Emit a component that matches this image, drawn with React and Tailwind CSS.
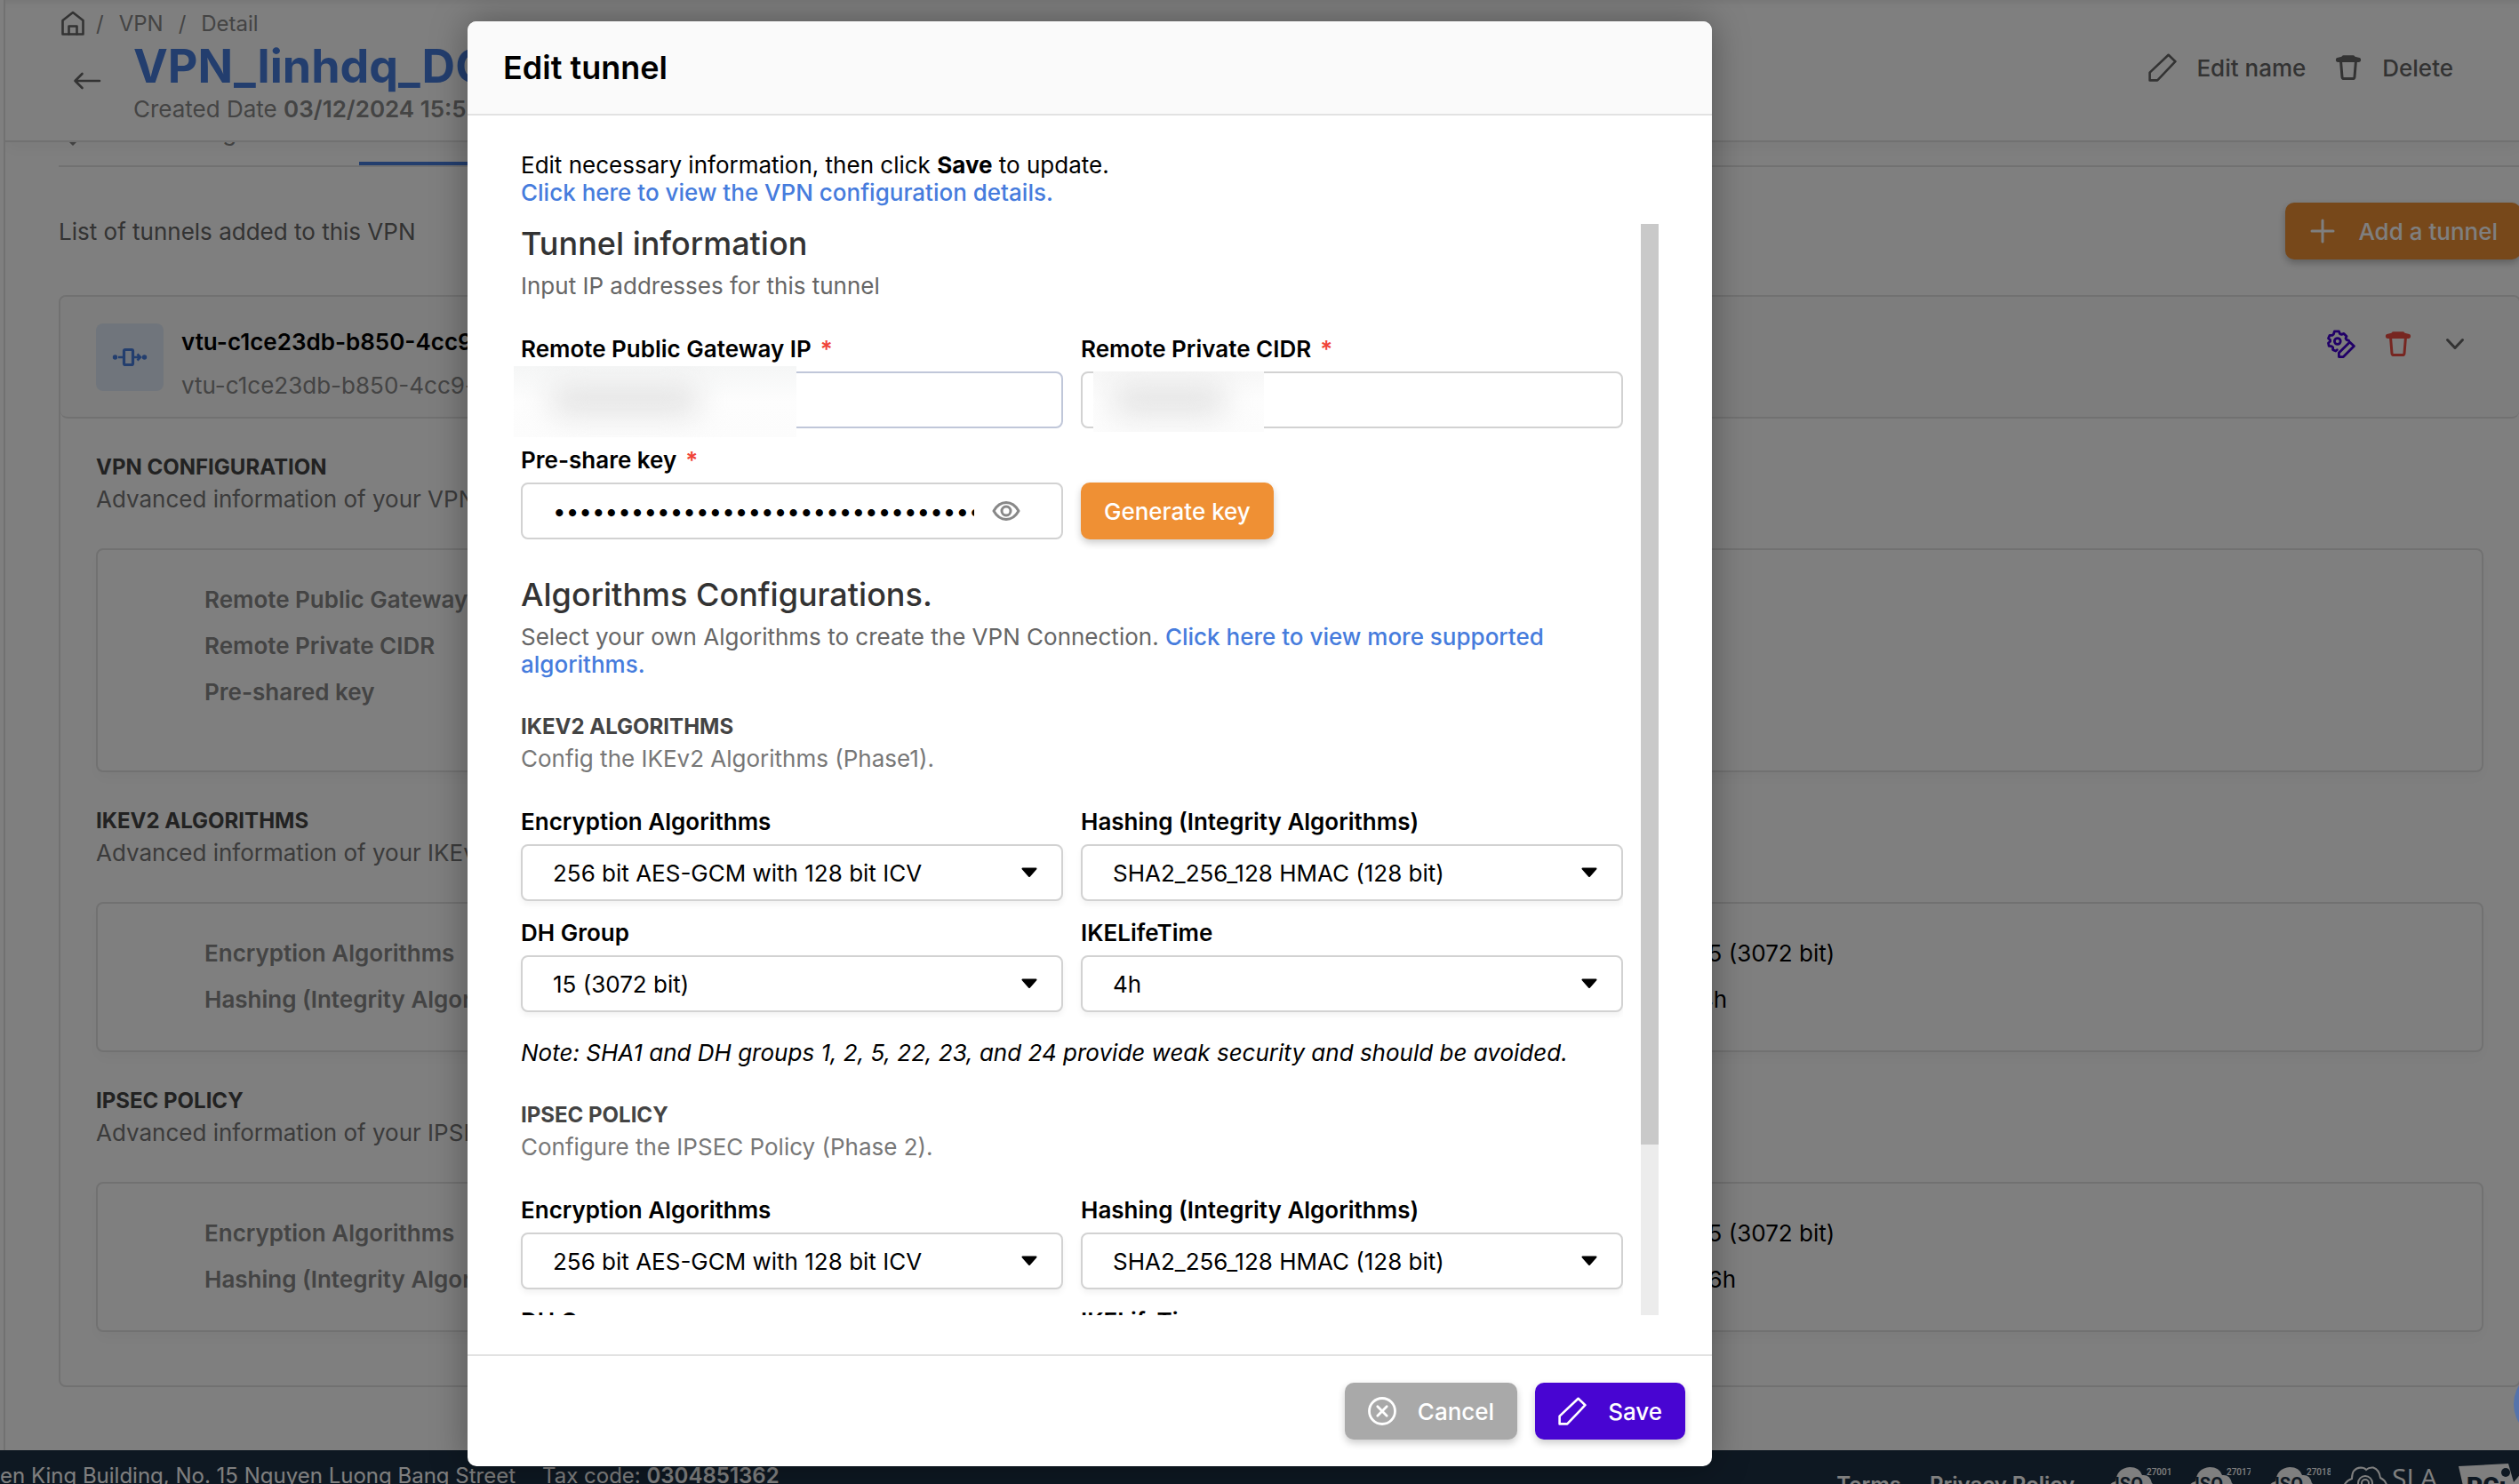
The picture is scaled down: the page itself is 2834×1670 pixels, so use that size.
import React, { useState } from "react";

function PencilIcon({ className }) {
  return (
    <svg viewBox="0 0 32 32" className={className} fill="none" stroke="currentColor" strokeWidth="2.6" strokeLinejoin="round" aria-hidden="true">
      <path d="M1.6 30.4V21.6L22.6 1.8L30.4 9.2L10.2 30.4Z" />
    </svg>
  );
}

function TrashIcon({ className }) {
  return (
    <svg viewBox="0 0 32 32" className={className} aria-hidden="true">
      <path d="M10.5 2.2h11a2 2 0 0 1 2 1.6l4 .9a2.6 2.6 0 0 1 0 5.2H4.5a2.6 2.6 0 0 1 0-5.2l4-.9a2 2 0 0 1 2-1.6z" fill="currentColor" />
      <path d="M7.6 9.5L9 26.600a2.2 2.2 0 0 0 2.2 2h9.600a2.2 2.2 0 0 0 2.2-2L24.4 9.5" fill="none" stroke="currentColor" strokeWidth="3" />
    </svg>
  );
}

function HomeIcon({ className }) {
  return (
    <svg viewBox="0 0 32 32" className={className} fill="none" stroke="currentColor" strokeWidth="2.6" strokeLinejoin="round" strokeLinecap="round" aria-hidden="true">
      <path d="M4.5 13L16 4L27.5 13V28.5H4.5Z" />
      <path d="M11.5 28.5V19.5H20.5V28.5" />
    </svg>
  );
}

function BackIcon({ className }) {
  return (
    <svg viewBox="0 0 32 32" className={className} fill="none" stroke="currentColor" strokeWidth="2.6" strokeLinejoin="round" strokeLinecap="round" aria-hidden="true">
      <path d="M30 16H2.5M10.5 8L2.5 16L10.5 24" />
    </svg>
  );
}

function PlusIcon({ className }) {
  return (
    <svg viewBox="0 0 32 32" className={className} fill="none" stroke="currentColor" strokeWidth="3" strokeLinecap="round" aria-hidden="true">
      <path d="M16 4V28M4 16H28" />
    </svg>
  );
}

function CancelIcon({ className }) {
  return (
    <svg viewBox="0 0 32 32" className={className} fill="none" stroke="currentColor" strokeWidth="2.8" strokeLinecap="round" aria-hidden="true">
      <circle cx="16" cy="16" r="14.5" />
      <path d="M10.8 10.8L21.2 21.2M21.2 10.8L10.8 21.2" />
    </svg>
  );
}

function EyeIcon({ className }) {
  return (
    <svg viewBox="0 0 32 24" className={className} fill="none" stroke="currentColor" strokeWidth="3" aria-hidden="true">
      <path d="M2 12C6 5 10.5 2.5 16 2.5S26 5 30 12C26 19 21.5 21.5 16 21.5S6 19 2 12Z" strokeLinejoin="round" />
      <circle cx="16" cy="12" r="5" />
    </svg>
  );
}

function ShieldIcon({ className }) {
  return (
    <svg viewBox="0 0 32 32" className={className} fill="currentColor" aria-hidden="true">
      <path d="M16 1L28 6V14C28 21 22 26 16 32C10 26 4 21 4 14V6Z" />
    </svg>
  );
}

function ChevronIcon({ className }) {
  return (
    <svg viewBox="0 0 32 32" className={className} fill="none" stroke="currentColor" strokeWidth="3" strokeLinecap="round" strokeLinejoin="round" aria-hidden="true">
      <path d="M7.5 11.5L16 20.5L24.5 11.5" />
    </svg>
  );
}

function GearEditIcon({ className }) {
  return (
    <svg viewBox="0 0 32 32" className={className} fill="none" stroke="currentColor" strokeWidth="2.8" strokeLinejoin="round" strokeLinecap="round" aria-hidden="true">
      <path d="M11.3 22.7L9.8 24L6.6 22.6V19.8L5 18.6L2.2 18.4L1.5 15L3.6 13.2V11.6L1.5 9.8L3 6.4L5.8 6.4L7.4 5.2L8.4 1.8H13.4L14.4 4.6L16.4 5.4L19 4.4L22 7.4L21 9.8L22 11.4L24.6 12.4" />
      <circle cx="11.8" cy="13" r="3.4" />
      <path d="M13.4 30.6V26L25.6 14L30.4 18.6L18.4 30.6Z" />
    </svg>
  );
}

function TunnelIcon({ className }) {
  return (
    <svg viewBox="0 0 40 24" className={className} fill="none" stroke="currentColor" strokeWidth="3.2" aria-hidden="true">
      <rect x="13.5" y="3.5" width="10" height="17" rx="1.5" />
      <path d="M7 12H13M24 12H31M28.5 8.5L32 12L28.5 15.5" strokeWidth="2.6" />
      <circle cx="3.5" cy="12" r="2.7" fill="currentColor" stroke="none" />
      <circle cx="36.5" cy="12" r="2.7" fill="currentColor" stroke="none" />
    </svg>
  );
}

function IsoLogo({ number }) {
  return (
    <svg viewBox="0 0 72 48" className="h-12 w-[72px]" role="img" aria-label={"ISO " + number}>
      <path d="M8 44A13 13 0 0 1 2 30Q1 19 10 17Q12 2 26 1Q37 1 40 10Q49 9 51 19Q57 24 55 34Q53 42 46 44Z" fill="#fff" />
      <text x="9" y="27" fontSize="20" fontWeight="700" fontFamily="Roboto, sans-serif" fill="#1d3044">ISO</text>
      <text x="45" y="10" fontSize="10" fontWeight="500" fontFamily="Roboto, sans-serif" fill="#fff">{number}</text>
    </svg>
  );
}

function SlaLogo() {
  return (
    <svg viewBox="0 0 120 48" className="h-12 w-[120px]" role="img" aria-label="SLA">
      <g fill="none" stroke="#fff" strokeWidth="2">
        <path d="M8 44Q0 38 2 27Q3 17 12 14Q12 2 22 1.5Q26 1.5 28 4Q31 1 36 1.5Q43 4 44 13Q52 17 52 27Q52 38 44 44" />
        <circle cx="27" cy="19" r="8" />
        <circle cx="27" cy="19" r="4" />
      </g>
      <text x="57" y="24" fontSize="30" fontFamily="'Open Sans', sans-serif" fill="#fff">SLA</text>
    </svg>
  );
}

function PciLogo() {
  return (
    <svg viewBox="0 0 72 48" className="h-12 w-[72px]" role="img" aria-label="PCI">
      <path d="M0 4L56 1L62 22L72 10V48H10Z" fill="#fff" />
      <circle cx="53" cy="11" r="5" fill="#1d3044" />
      <text x="9" y="36" fontSize="28" fontWeight="900" fontFamily="Roboto, sans-serif" fill="#1d3044">PCı</text>
    </svg>
  );
}

const SECTIONS = [
  {
    title: "VPN CONFIGURATION",
    text: "Advanced information of your VPN",
    tall: true,
    left: [["Remote Public Gateway IP", ""], ["Remote Private CIDR", ""], ["Pre-shared key", ""]],
    right: [],
  },
  {
    title: "IKEV2 ALGORITHMS",
    text: "Advanced information of your IKEv2",
    left: [["Encryption Algorithms", ""], ["Hashing (Integrity Algorithms)", ""]],
    right: [["DH Group", "15 (3072 bit)"], ["IKELifeTime", "4h"]],
  },
  {
    title: "IPSEC POLICY",
    text: "Advanced information of your IPSEC",
    left: [["Encryption Algorithms", ""], ["Hashing (Integrity Algorithms)", ""]],
    right: [["DH Group", "15 (3072 bit)"], ["Lifetime", "16h"]],
  },
];

function DetailList({ rows }) {
  return (
    <dl className="flex flex-col gap-[21px]">
      {rows.map(([label, value]) => (
        <div key={label} className="flex">
          <dt className="w-[400px] shrink-0 font-semibold text-[#888888]">{label}</dt>
          <dd className="text-black">{value}</dd>
        </div>
      ))}
    </dl>
  );
}

function DetailSection({ section }) {
  return (
    <section>
      <h3 className="text-[24px] leading-[29px] font-bold text-[#444444]">{section.title}</h3>
      <p className="mt-[6px] text-[#777777]">{section.text}</p>
      <div
        className={
          "mt-10 grid grid-cols-2 rounded-lg border-2 border-[#e2e2e2] pt-10 pl-[120px] shadow-[0_8px_16px_rgba(0,0,0,0.03)] " +
          (section.tall ? "pb-[73px]" : "pb-[42px]")
        }
      >
        <DetailList rows={section.left} />
        <DetailList rows={section.right} />
      </div>
    </section>
  );
}

function FieldLabel({ id, children, required }) {
  return (
    <label htmlFor={id} className="block font-semibold text-black">
      {children}
      {required && <span className="ml-[10px] text-[#f04438]">*</span>}
    </label>
  );
}

function SelectField({ id, label, options }) {
  const [value, setValue] = useState(options[0]);
  return (
    <div>
      <FieldLabel id={id}>{label}</FieldLabel>
      <div className="relative mt-[10px]">
        <select
          id={id}
          value={value}
          onChange={(e) => setValue(e.target.value)}
          className="h-16 w-full appearance-none rounded-lg border-2 border-[#d2d2d2] bg-white pr-16 pl-[34px] text-black shadow-[0_4px_6px_rgba(0,0,0,0.05)]"
        >
          {options.map((o) => (
            <option key={o}>{o}</option>
          ))}
        </select>
        <svg viewBox="0 0 20 12" className="pointer-events-none absolute top-[26px] right-7 h-3 w-5" aria-hidden="true">
          <path d="M2.5 1.5H17.5L10 10Z" fill="#000" stroke="#000" strokeWidth="2" strokeLinejoin="round" />
        </svg>
      </div>
    </div>
  );
}

function Dialog() {
  const [key, setKey] = useState("k7Jq2LmX9vRt4ZbN8cWp5HsD3fGy6TuA1eQo");
  const [shown, setShown] = useState(false);
  return (
    <div
      role="dialog"
      aria-modal="true"
      aria-labelledby="dialog-title"
      className="flex h-full w-full max-w-[1400px] flex-col overflow-hidden rounded-[10px] bg-white shadow-[0_0_40px_rgba(0,0,0,0.35)]"
    >
      <header className="border-b-2 border-[#e2e2e2] bg-[#fafafa] px-10 py-[30px]">
        <h2 id="dialog-title" className="text-[36px] leading-[44px] font-semibold text-black">Edit tunnel</h2>
      </header>

      <div className="flex min-h-0 flex-1 flex-col px-[60px] pt-10 pb-11">
        <p className="text-black">
          Edit necessary information, then click <b className="font-bold">Save</b> to update.
        </p>
        <p>
          <a href="#configuration" className="font-medium text-[#467cdd]">Click here to view the VPN configuration details.</a>
        </p>

        <div className="mt-5 flex min-h-0 flex-1 gap-5">
          <div className="-ml-2 min-w-0 flex-1 overflow-y-auto pl-2 [scrollbar-width:none]">
            <h3 className="text-[36px] leading-[44px] font-medium text-[#333333]">Tunnel information</h3>
            <p className="mt-[10px] text-[#666666]">Input IP addresses for this tunnel</p>

            <div className="mt-10 grid grid-cols-2 gap-5">
              <div>
                <FieldLabel id="gateway" required>Remote Public Gateway IP</FieldLabel>
                <div className="relative mt-[10px]">
                  <input id="gateway" type="text" className="h-16 w-full rounded-lg border-2 border-[#c0c7d9] bg-white px-[34px] text-black" />
                  <div className="absolute -top-[6px] -left-2 h-20 w-[318px] overflow-hidden bg-linear-to-b from-[#f5f6f6] via-[#fdfdfd] to-[#fcfcfc]">
                    <div className="mt-5 ml-10 h-9 w-[170px] rounded-full bg-[#e4e4e4] blur-lg" />
                  </div>
                </div>
              </div>
              <div>
                <FieldLabel id="cidr" required>Remote Private CIDR</FieldLabel>
                <div className="relative mt-[10px]">
                  <input id="cidr" type="text" className="h-16 w-full rounded-lg border-2 border-[#d2d2d2] bg-white px-[34px] text-black" />
                  <div className="absolute top-0 left-[14px] h-[68px] w-48 overflow-hidden bg-linear-to-b from-[#f7f7f7] via-[#fdfdfd] to-[#fcfcfc]">
                    <div className="mt-[14px] ml-5 h-9 w-[130px] rounded-full bg-[#e4e4e4] blur-lg" />
                  </div>
                </div>
              </div>
              <div>
                <FieldLabel id="psk" required>Pre-share key</FieldLabel>
                <div className="mt-[10px] flex h-16 items-center rounded-lg border-2 border-[#d2d2d2] bg-white pr-[46px] pl-[34px]">
                  <input
                    id="psk"
                    type={shown ? "text" : "password"}
                    value={key}
                    onChange={(e) => setKey(e.target.value)}
                    className="min-w-0 flex-1 bg-transparent text-black outline-none"
                  />
                  <button type="button" aria-label="Show key" onClick={() => setShown(!shown)} className="ml-5 text-[#888888]">
                    <EyeIcon className="h-6 w-8" />
                  </button>
                </div>
              </div>
              <div className="flex items-end">
                <button type="button" className="h-16 rounded-[10px] bg-[#ef9034] px-[26px] font-medium text-white shadow-[0_4px_8px_rgba(0,0,0,0.2)]">
                  Generate key
                </button>
              </div>
            </div>

            <h3 className="mt-10 text-[36px] leading-[44px] font-medium text-[#333333]">Algorithms Configurations.</h3>
            <p className="mt-[10px] text-[#666666]">
              Select your own Algorithms to create the VPN Connection.{" "}
              <a href="#algorithms" className="font-medium text-[#467cdd]">Click here to view more supported algorithms.</a>
            </p>

            <h4 className="mt-10 text-[24px] leading-[29px] font-bold text-[#444444]">IKEV2 ALGORITHMS</h4>
            <p className="mt-[6px] text-[#777777]">Config the IKEv2 Algorithms (Phase1).</p>
            <div className="mt-10 grid grid-cols-2 gap-5">
              <SelectField id="ike-enc" label="Encryption Algorithms" options={["256 bit AES-GCM with 128 bit ICV"]} />
              <SelectField id="ike-hash" label="Hashing (Integrity Algorithms)" options={["SHA2_256_128 HMAC (128 bit)"]} />
              <SelectField id="ike-dh" label="DH Group" options={["15 (3072 bit)"]} />
              <SelectField id="ike-life" label="IKELifeTime" options={["4h"]} />
            </div>
            <p className="mt-[30px] text-black italic">
              Note: SHA1 and DH groups 1, 2, 5, 22, 23, and 24 provide weak security and should be avoided.
            </p>

            <h4 className="mt-10 text-[24px] leading-[29px] font-bold text-[#444444]">IPSEC POLICY</h4>
            <p className="mt-[6px] text-[#777777]">Configure the IPSEC Policy (Phase 2).</p>
            <div className="mt-10 grid grid-cols-2 gap-5 pb-[120px]">
              <SelectField id="ips-enc" label="Encryption Algorithms" options={["256 bit AES-GCM with 128 bit ICV"]} />
              <SelectField id="ips-hash" label="Hashing (Integrity Algorithms)" options={["SHA2_256_128 HMAC (128 bit)"]} />
              <SelectField id="ips-dh" label="DH Group" options={["15 (3072 bit)"]} />
              <SelectField id="ips-life" label="IKELifeTime" options={["16h"]} />
            </div>
          </div>
          <div className="w-5 bg-[#ececec]" aria-hidden="true">
            <div className="h-[calc(84%+4px)] bg-[#c9c9c9]" />
          </div>
        </div>
      </div>

      <footer className="flex justify-end gap-5 border-t-2 border-[#e2e2e2] p-[30px]">
        <button type="button" className="flex h-16 items-center gap-6 rounded-[10px] bg-[#a9a9a9] px-[26px] font-medium text-white shadow-[0_4px_8px_rgba(0,0,0,0.2)]">
          <CancelIcon className="size-8" />
          Cancel
        </button>
        <button type="button" className="flex h-16 items-center gap-6 rounded-[10px] bg-[#4805d2] px-[26px] font-medium text-white shadow-[0_4px_8px_rgba(0,0,0,0.2)]">
          <PencilIcon className="size-8" />
          Save
        </button>
      </footer>
    </div>
  );
}

export default function App() {
  return (
    <div className="relative flex h-screen flex-col overflow-hidden bg-white font-['Inter',sans-serif] text-[26px] leading-[31px]">
      <main className="-mr-[2px] ml-1 flex min-h-0 flex-1 flex-col overflow-hidden border-l-2 border-[#e2e2e2]">
        <header className="relative z-10 flex h-40 shrink-0 justify-between border-b-2 border-[#e2e2e2] bg-white pr-[76px] pl-[60px] shadow-[inset_0_12px_12px_-12px_rgba(0,0,0,0.12),0_8px_16px_rgba(0,0,0,0.04)]">
          <div className="pt-[10px]">
            <nav aria-label="Breadcrumb" className="flex h-8 items-center text-[24px] leading-[29px] text-[#888888]">
              <a href="#home" aria-label="Home" className="text-[#666666]"><HomeIcon className="size-8" /></a>
              <span className="ml-[10px]">/</span>
              <a href="#vpn" className="ml-[17px]">VPN</a>
              <span className="mx-[17px]">/</span>
              <span>Detail</span>
            </nav>
            <div className="flex items-center gap-9 pt-px pl-4">
              <button type="button" aria-label="Back" className="text-[#666666]"><BackIcon className="size-8" /></button>
              <div>
                <h1 className="text-[52px] leading-[64px] font-bold text-[#467cdd]">VPN_linhdq_DC</h1>
                <p className="text-[#888888]">Created Date <b className="font-semibold">03/12/2024 15:52</b></p>
              </div>
            </div>
          </div>
          <div className="mt-[60px] flex h-8 gap-8 font-medium text-[#666666]">
            <button type="button" className="flex items-center gap-[22px]"><PencilIcon className="size-8" />Edit name</button>
            <button type="button" className="flex items-center gap-[22px]"><TrashIcon className="size-8" />Delete</button>
          </div>
        </header>

        <div className="pl-[60px]">
          <div role="tablist" className="flex h-7 items-end overflow-hidden border-b-2 border-[#e2e2e2] text-[#888888]">
            <button type="button" role="tab" aria-selected="false" className="flex w-[338px] shrink-0 items-center gap-6 pb-[22px]">
              <ShieldIcon className="size-8" />
              VPN setting
            </button>
            <button type="button" role="tab" aria-selected="true" aria-label="Tunnels" className="h-1 w-[300px] bg-[#467cdd]" />
          </div>

          <div className="mt-10 flex items-center justify-between">
            <p className="text-[#666666]">List of tunnels added to this VPN</p>
            <button type="button" className="flex h-16 items-center gap-6 rounded-[10px] bg-[#ef9034] px-[26px] font-medium text-white shadow-[0_4px_8px_rgba(0,0,0,0.25)]">
              <PlusIcon className="size-8" />
              Add a tunnel
            </button>
          </div>

          <article className="mt-10 rounded-lg border-2 border-[#e2e2e2]">
            <header className="flex items-start justify-between rounded-lg border-b-2 border-[#e2e2e2] bg-[#fafafa] px-10 pt-[30px] pb-5">
              <div className="flex gap-5">
                <span className="flex size-[76px] items-center justify-center rounded-lg bg-[#e0eaf8] text-[#467cdd]">
                  <TunnelIcon className="h-6 w-10" />
                </span>
                <div className="flex flex-col gap-[18px] pt-[5px]">
                  <h2 className="font-semibold text-black">vtu-c1ce23db-b850-4cc9-a1</h2>
                  <p className="text-[#888888]">vtu-c1ce23db-b850-4cc9-a1</p>
                </div>
              </div>
              <div className="flex gap-8 pt-[7px] pr-4">
                <button type="button" aria-label="Edit tunnel" className="text-[#4200d0]"><GearEditIcon className="size-8" /></button>
                <button type="button" aria-label="Delete tunnel" className="text-[#ee4d42]"><TrashIcon className="size-8" /></button>
                <button type="button" aria-label="Collapse" className="text-[#666666]"><ChevronIcon className="size-8" /></button>
              </div>
            </header>
            <div className="flex flex-col gap-10 px-10 pt-10 pb-[60px]">
              {SECTIONS.map((s) => (
                <DetailSection key={s.title} section={s} />
              ))}
            </div>
          </article>
        </div>
      </main>

      <footer className="flex h-[38px] shrink-0 items-start justify-between overflow-hidden bg-[#1d3044] pt-[14px] text-[24px] leading-[29px] text-white">
        <address className="flex gap-[30px] not-italic">
          <span>en King Building, No. 15 Nguyen Luong Bang Street</span>
          <span>Tax code: <b className="font-semibold">0304851362</b></span>
        </address>
        <div className="flex items-start">
          <nav className="mr-9 flex gap-8 pt-[10px] font-semibold">
            <a href="#terms">Terms</a>
            <a href="#privacy">Privacy Policy</a>
          </nav>
          <div className="mt-1 flex gap-[18px]">
            <IsoLogo number="27001" />
            <IsoLogo number="27017" />
            <IsoLogo number="27018" />
          </div>
          <div className="mt-1 -mr-1 ml-3 flex gap-3">
            <SlaLogo />
            <div className="-mt-1"><PciLogo /></div>
          </div>
        </div>
      </footer>

      <div className="absolute inset-0 z-20 flex justify-center bg-black/50 pt-6 pr-[382px] pb-5">
        <Dialog />
      </div>
      <button type="button" aria-label="Help" className="absolute -right-[74px] bottom-[50px] z-30 size-20 rounded-full bg-[#5573ab]" />
    </div>
  );
}
